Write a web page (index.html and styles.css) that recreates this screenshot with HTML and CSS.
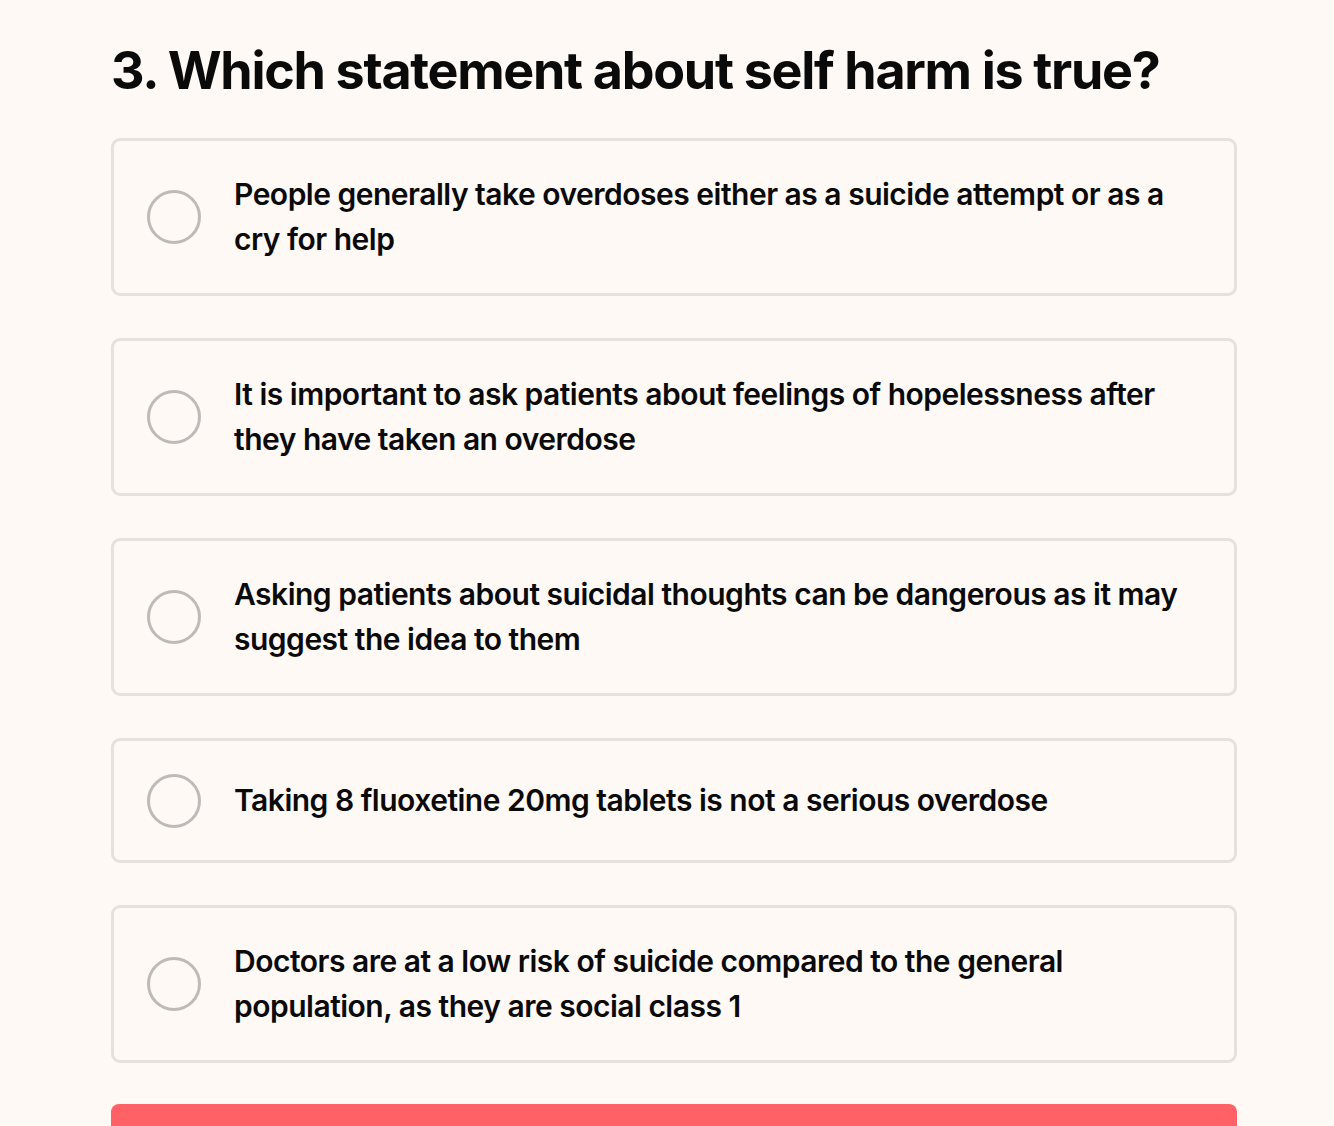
FILE: index.html
```html
<!DOCTYPE html>
<html>
<head>
<meta charset="utf-8">
<link rel="stylesheet" href="styles.css">
</head>
<body>
<main class="quiz">
  <h1 class="question">3. Which statement about self harm is true?</h1>
  <div class="options">
    <label class="option">
      <span class="radio"></span>
      <span class="text">People generally take overdoses either as a suicide attempt or as a cry for help</span>
    </label>
    <label class="option">
      <span class="radio"></span>
      <span class="text">It is important to ask patients about feelings of hopelessness after they have taken an overdose</span>
    </label>
    <label class="option">
      <span class="radio"></span>
      <span class="text">Asking patients about suicidal thoughts can be dangerous as it may suggest the idea to them</span>
    </label>
    <label class="option">
      <span class="radio"></span>
      <span class="text">Taking 8 fluoxetine 20mg tablets is not a serious overdose</span>
    </label>
    <label class="option">
      <span class="radio"></span>
      <span class="text">Doctors are at a low risk of suicide compared to the general population, as they are social class 1</span>
    </label>
  </div>
  <button class="submit"></button>
</main>
</body>
</html>
```

FILE: styles.css
```css
html, body {
  margin: 0;
  padding: 0;
  background: #fef9f5;
}
body {
  font-family: Inter, "Open Sans", sans-serif;
  color: #0a0a0a;
}
.quiz {
  width: 1126px;
  margin: 0 0 0 111px;
  padding-top: 38px;
}
.question {
  margin: 0 0 34px 0;
  font-size: 52px;
  line-height: 66px;
  font-weight: 700;
  letter-spacing: -1.3px;
}
.options {
  display: flex;
  flex-direction: column;
  gap: 42px;
}
.option {
  display: flex;
  align-items: center;
  gap: 33px;
  border: 3px solid #e6e1dd;
  border-radius: 9px;
  padding: 31px 33px;
  min-height: 57px;
}
.radio {
  flex: none;
  width: 48px;
  height: 48px;
  border: 3px solid #bdbab7;
  border-radius: 50%;
}
.text {
  font-size: 30px;
  line-height: 45px;
  font-weight: 600;
  letter-spacing: -0.5px;
}
.submit {
  display: block;
  width: 100%;
  height: 60px;
  margin-top: 41px;
  border: none;
  border-radius: 8px;
  background: #ff6166;
}
```
